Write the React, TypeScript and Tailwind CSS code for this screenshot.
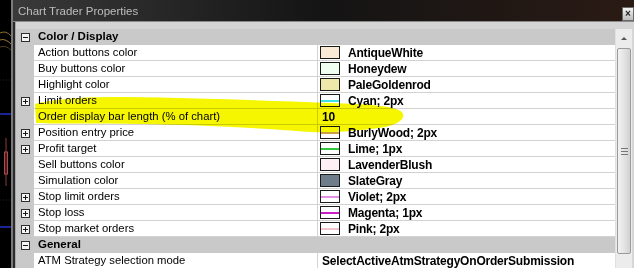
import React from "react"

type Swatch = { fill?: string; line?: string; lineW?: number }
type Row =
  | { kind: "cat"; name: string }
  | { kind: "prop"; name: string; expand?: boolean; value: string; swatch?: Swatch }

const rows: Row[] = [
  { kind: "cat", name: "Color / Display" },
  { kind: "prop", name: "Action buttons color", value: "AntiqueWhite", swatch: { fill: "#faebd7" } },
  { kind: "prop", name: "Buy buttons color", value: "Honeydew", swatch: { fill: "#f0fff0" } },
  { kind: "prop", name: "Highlight color", value: "PaleGoldenrod", swatch: { fill: "#eee8aa" } },
  { kind: "prop", name: "Limit orders", expand: true, value: "Cyan; 2px", swatch: { fill: "#ffffff", line: "#3ee0ea", lineW: 2 } },
  { kind: "prop", name: "Order display bar length (% of chart)", value: "10" },
  { kind: "prop", name: "Position entry price", expand: true, value: "BurlyWood; 2px", swatch: { fill: "#ffffff", line: "#c9a04a", lineW: 2 } },
  { kind: "prop", name: "Profit target", expand: true, value: "Lime; 1px", swatch: { fill: "#ffffff", line: "#2ec83a", lineW: 2 } },
  { kind: "prop", name: "Sell buttons color", value: "LavenderBlush", swatch: { fill: "#fff0f5" } },
  { kind: "prop", name: "Simulation color", value: "SlateGray", swatch: { fill: "#6f7c8a" } },
  { kind: "prop", name: "Stop limit orders", expand: true, value: "Violet; 2px", swatch: { fill: "#ffffff", line: "#e48ee4", lineW: 2 } },
  { kind: "prop", name: "Stop loss", expand: true, value: "Magenta; 1px", swatch: { fill: "#ffffff", line: "#c81ec8", lineW: 2 } },
  { kind: "prop", name: "Stop market orders", expand: true, value: "Pink; 2px", swatch: { fill: "#ffffff", line: "#f4c4cc", lineW: 2 } },
  { kind: "cat", name: "General" },
  { kind: "prop", name: "ATM Strategy selection mode", value: "SelectActiveAtmStrategyOnOrderSubmission" },
]

function ToggleBox({ plus }: { plus: boolean }) {
  return (
    <div className="relative w-[9px] h-[9px] border border-[#2f2f2f] bg-[#f4f4f4]">
      <div className="absolute left-[1px] top-[3px] w-[5px] h-[1px] bg-[#1a1a1a]" />
      {plus && <div className="absolute left-[3px] top-[1px] w-[1px] h-[5px] bg-[#1a1a1a]" />}
    </div>
  )
}

function SwatchBox({ s }: { s: Swatch }) {
  return (
    <div
      className="w-[20px] h-[13px] border border-[#1a1a1a] flex items-center shrink-0"
      style={{ background: s.fill }}
    >
      {s.line && <div className="w-full" style={{ height: s.lineW ?? 1, background: s.line }} />}
    </div>
  )
}

function GridRow({ row }: { row: Row }) {
  if (row.kind === "cat") {
    return (
      <div className="flex h-[16px] shrink-0 bg-[#c9c9c9]">
        <div className="w-[18px] flex items-center justify-center">
          <ToggleBox plus={false} />
        </div>
        <div className="pl-[4px] flex items-center text-[11.5px] font-bold text-black">{row.name}</div>
      </div>
    )
  }
  return (
    <div className="flex h-[16px] shrink-0">
      <div className="w-[18px] bg-[#c9c9c9] flex items-center justify-center">
        {row.expand && <ToggleBox plus />}
      </div>
      <div className="w-[284px] bg-white border-b border-r border-[#d2d2d2] pl-[4px] flex items-center text-[11.3px] text-black whitespace-nowrap">
        {row.name}
      </div>
      <div className="flex-1 bg-white border-b border-[#d2d2d2] flex items-center pl-[2px] gap-[8px] text-[12px] font-bold text-black whitespace-nowrap tracking-[-0.2px]">
        {row.swatch && <SwatchBox s={row.swatch} />}
        <span className={row.swatch ? "" : "pl-[2px]"}>{row.value}</span>
      </div>
    </div>
  )
}

function Scrollbar() {
  return (
    <div className="w-[17px] bg-[#ececec] flex flex-col border-l border-[#e0e0e0]">
      <div className="h-[18px] flex items-center justify-center">
        <div className="w-0 h-0 border-l-[3px] border-r-[3px] border-b-[3px] border-l-transparent border-r-transparent border-b-[#555]" />
      </div>
      <div className="mt-[1px] h-[206px] mx-[1px] rounded-[2px] border border-[#9a9a9a] bg-gradient-to-r from-[#f2f2f2] via-[#e4e4e4] to-[#d2d2d2] flex flex-col items-center justify-center gap-[2px]">
        <div className="w-[7px] h-[1px] bg-[#777]" />
        <div className="w-[7px] h-[1px] bg-[#777]" />
        <div className="w-[7px] h-[1px] bg-[#777]" />
      </div>
    </div>
  )
}

export default function App() {
  return (
    <div
      className="relative w-[634px] h-[268px] overflow-hidden flex bg-black"
      style={{ fontFamily: "'Liberation Sans', Arial, sans-serif" }}
    >
      {/* chart behind the window */}
      <div className="w-[11px] h-full shrink-0">
        <svg width="11" height="268" viewBox="0 0 11 268">
          <path d="M0 33 Q6 30 11 36" stroke="#b08a3a" strokeWidth="0.8" fill="none" />
          <path d="M0 40 Q5 38 11 44" stroke="#c49a40" strokeWidth="0.8" fill="none" />
          <path d="M0 47 Q6 45 11 50" stroke="#8c6a30" strokeWidth="0.6" fill="none" />
          <line x1="0" y1="114" x2="11" y2="114" stroke="#2a3cff" strokeWidth="1.2" />
          <line x1="0" y1="227" x2="11" y2="227" stroke="#2a3cff" strokeWidth="1.2" />
          <line x1="6" y1="138" x2="6" y2="186" stroke="#8a3a3a" strokeWidth="1" />
          <rect x="4.5" y="152" width="3" height="22" fill="none" stroke="#b04a4a" strokeWidth="1" />
          <line x1="0" y1="80" x2="11" y2="80" stroke="#222" strokeWidth="1" strokeDasharray="1 2" />
          <line x1="0" y1="200" x2="11" y2="200" stroke="#222" strokeWidth="1" strokeDasharray="1 2" />
        </svg>
      </div>

      {/* window */}
      <div className="flex-1 flex flex-col border-l-2 border-[#7a7a7a]">
        {/* title bar */}
        <div className="h-[22px] shrink-0 flex items-center justify-between bg-gradient-to-r from-[#3a3a3a] via-[#141414] to-[#2a1a14] border-b border-[#8a8a8a]">
          <span className="pl-[5px] pt-[3px] text-[11.5px] text-[#bdbdbd]">Chart Trader Properties</span>
          <div className="w-[12px] h-[14px] mt-[6px] border border-[#6a6a6a] bg-gradient-to-b from-[#f2f2f2] to-[#bcbcbc] flex items-center justify-center text-[10px] font-bold leading-none text-[#222]">
            ×
          </div>
        </div>

        {/* body */}
        <div className="flex-1 flex bg-[#1e1e1e] min-h-0">
          <div className="w-[2px] bg-[#2a2a2a]" />
          <div className="flex-1 flex flex-col bg-[#d6d6d6] border-l border-[#a8a8a8] min-h-0">
            <div className="h-[7px] shrink-0 bg-[#d4d4d4]" />
            <div className="flex-1 flex min-h-0">
              <div className="flex-1 flex flex-col">
                {rows.map((r, i) => (
                  <GridRow key={i} row={r} />
                ))}
              </div>
              <Scrollbar />
              <div className="w-[2px] bg-[#d6d6d6]" />
            </div>
          </div>
        </div>
      </div>

      {/* yellow highlighter stroke */}
      <svg
        className="absolute inset-0 pointer-events-none mix-blend-multiply"
        width="634"
        height="268"
        viewBox="0 0 634 268"
      >
        <path
          d="M35 104 C50 100 80 97 110 97 C170 97 250 100 330 103 C370 104 395 106 402 112 C406 118 400 124 385 127 C365 130 340 133 310 132 C260 128 200 125 140 124 C100 123 60 124 36 123 Z"
          fill="#f6f600"
        />
      </svg>
    </div>
  )
}
